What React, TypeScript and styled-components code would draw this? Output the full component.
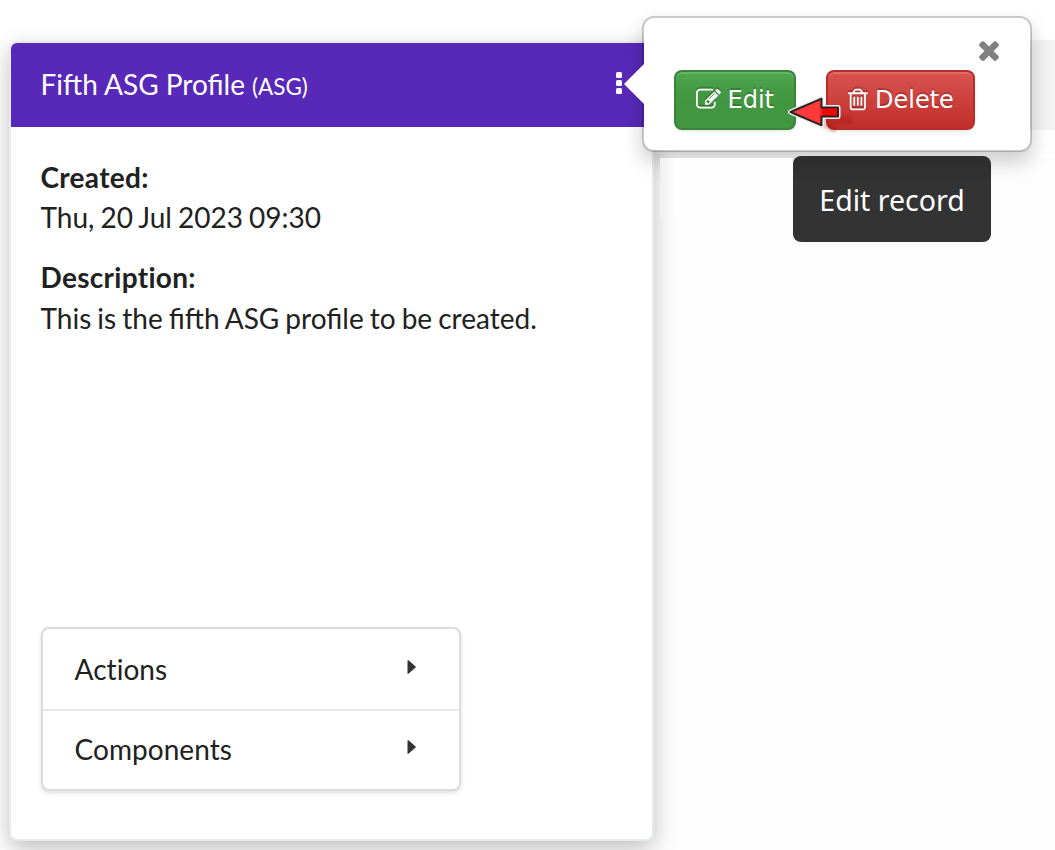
import React from "react";
import styled, { createGlobalStyle } from "styled-components";

const GlobalStyle = createGlobalStyle`
  *, *::before, *::after { box-sizing: border-box; }
  body {
    margin: 0;
    background: #fff;
    color: #212121;
    font-family: Lato, "Liberation Sans", sans-serif;
  }
`;

const Page = styled.main`
  position: relative;
  width: 1055px;
  height: 850px;
  overflow: hidden;
  padding: 41px 0 0 9px;
`;

const SideArea = styled.div`
  position: absolute;
  left: 655px;
  right: 0;
  top: 158px;
  bottom: 0;
  background: #fdfdfd;
`;

const SideBand = styled.div`
  position: absolute;
  left: 1020px;
  right: 0;
  top: 40px;
  height: 90px;
  background: #f3f3f3;
`;

const SidePanel = styled.div`
  position: absolute;
  left: 660px;
  width: 133px;
  top: 158px;
  height: 60px;
  background: linear-gradient(90deg, #efefef, #fdfdfd 14px);
`;

const Card = styled.section`
  position: relative;
  display: flex;
  flex-direction: column;
  width: 645px;
  height: 800px;
  border: 2px solid #e6eaed;
  border-radius: 8px;
  background: #fff;
  box-shadow: 0 8px 22px rgba(0, 0, 0, 0.25);
`;

const CardHeader = styled.header`
  display: flex;
  align-items: center;
  justify-content: space-between;
  height: 84px;
  padding: 0 30px 0 29.5px;
  border-radius: 6px 6px 0 0;
  background: #5829b9;
  color: #fff;
`;

const CardTitle = styled.h1`
  margin: 0;
  font-size: 28px;
  font-weight: 400;
  line-height: 40px;

  small { font-size: 22.4px; }
`;

const MenuButton = styled.button`
  display: flex;
  flex-direction: column;
  gap: 2px;
  padding: 0;
  border: 0;
  background: none;
  margin-bottom: 4px;
`;

const MenuDot = styled.span`
  width: 6px;
  height: 6px;
  border-radius: 1.5px;
  background: #fff;
`;

const CardBody = styled.div`
  display: flex;
  flex: 1;
  flex-direction: column;
  padding: 30px 30px 48px;
`;

const Field = styled.dl`
  margin: 0 0 20px -0.5px;
  font-size: 28px;
  line-height: 40px;
`;

const FieldName = styled.dt`
  font-weight: 700;
  font-variant-ligatures: none;
  letter-spacing: 0.3px;
`;

const FieldValue = styled.dd<{ $offset?: number }>`
  margin: 0;
  padding-top: ${(p) => p.$offset ?? 0}px;
  word-spacing: -1.1px;
`;

const Accordion = styled.div`
  width: 420px;
  height: 164px;
  margin-top: auto;
  border: 2px solid #dcdcdc;
  border-radius: 8px;
  background: #fff;
  box-shadow: 0 2px 4px rgba(34, 36, 38, 0.15);
`;

const AccordionItem = styled.div`
  display: flex;
  align-items: center;
  justify-content: space-between;
  height: 76px;
  padding: 0 43px 0 31.5px;
  font-size: 28px;
  line-height: 40px;
  letter-spacing: 0.05px;
  font-variant-ligatures: none;

  &:first-child {
    height: 82px;
    border-bottom: 2px solid #e7e8e8;
  }
`;

const Caret = styled.svg`
  width: 9px;
  height: 14px;
  margin-bottom: 4px;
  fill: #333;
`;

const Popover = styled.div`
  position: absolute;
  left: 642px;
  top: 16px;
  width: 390px;
  height: 136px;
  padding: 52px 30px 0;
  border: 2px solid rgba(0, 0, 0, 0.2);
  border-radius: 12px;
  background: #fff;
  background-clip: padding-box;
  box-shadow: 0 10px 20px rgba(0, 0, 0, 0.2);
`;

const PopoverTail = styled.svg`
  position: absolute;
  left: -20px;
  top: 46px;
  width: 21px;
  height: 40px;
  fill: #fff;
`;

const CloseButton = styled.button`
  position: absolute;
  right: 26px;
  top: 16.5px;
  display: flex;
  padding: 0;
  border: 0;
  background: none;
  color: #808080;
`;

const ButtonRow = styled.div`
  display: flex;
  gap: 30px;
`;

const tones = {
  green: { from: "#4ea64e", to: "#41963f", edge: "#398439" },
  red: { from: "#d9534f", to: "#c12e2a", edge: "#b92c28" },
};

const ActionButton = styled.button<{ $tone: keyof typeof tones; $width: number }>`
  display: flex;
  align-items: center;
  width: ${(p) => p.$width}px;
  height: 60px;
  padding: 0 0 0 20px;
  border: 2px solid ${(p) => tones[p.$tone].edge};
  border-radius: 8px;
  background: linear-gradient(
    ${(p) => tones[p.$tone].from},
    ${(p) => tones[p.$tone].to} ${(p) => (p.$tone === "green" ? "50%" : "100%")}
  );
  box-shadow: inset 0 2px 0 rgba(255, 255, 255, 0.15), 0 2px 2px rgba(0, 0, 0, 0.075);
  color: #fff;
  font: 400 24px/36px "DejaVu Sans", sans-serif;
  text-shadow: 0 -2px 0 rgba(0, 0, 0, 0.2);
`;

const ButtonIcon = styled.svg<{ $gap: number }>`
  flex: none;
  width: 25px;
  height: 25px;
  margin: -1px ${(p) => p.$gap}px 0 0;
  fill: currentColor;
  filter: drop-shadow(0 -2px 0 rgba(0, 0, 0, 0.2));
`;

const Tooltip = styled.div`
  position: absolute;
  left: 793px;
  top: 156px;
  display: flex;
  align-items: center;
  justify-content: center;
  width: 198px;
  height: 86px;
  padding-top: 2px;
  border-radius: 8px;
  background: linear-gradient(#2d2d2d, #333 30%);
  color: #fff;
  font: 400 28.5px/40px "Noto Sans", sans-serif;
`;

const Pointer = styled.svg`
  position: absolute;
  left: 784px;
  top: 90px;
  width: 80px;
  height: 50px;
`;

const EDIT_PATH =
  "M888 1184l116-116-152-152-116 116v56h96v96h56zm440-720q-16-16-33 1l-350 350q-17 17-1 33t33-1l350-350q17-17 1-33zm80 594v190q0 119-84.5 203.5t-203.5 84.5h-832q-119 0-203.5-84.5t-84.5-203.5v-832q0-119 84.5-203.5t203.5-84.5h832q63 0 117 25 15 7 18 23 3 17-9 29l-49 49q-14 14-32 8-23-6-45-6h-832q-66 0-113 47t-47 113v832q0 66 47 113t113 47h832q66 0 113-47t47-113v-126q0-13 9-22l64-64q15-15 35-7t20 29zm-96-738l288 288-672 672h-288v-288zm444 132l-92 92-288-288 92-92q28-28 68-28t68 28l152 152q28 28 28 68t-28 68z";
const TRASH_PATH =
  "M704 736v576q0 14-9 23t-23 9h-64q-14 0-23-9t-9-23v-576q0-14 9-23t23-9h64q14 0 23 9t9 23zm256 0v576q0 14-9 23t-23 9h-64q-14 0-23-9t-9-23v-576q0-14 9-23t23-9h64q14 0 23 9t9 23zm256 0v576q0 14-9 23t-23 9h-64q-14 0-23-9t-9-23v-576q0-14 9-23t23-9h64q14 0 23 9t9 23zm128 724v-948h-896v948q0 22 7 40.5t14.5 27 10.5 8.5h832q3 0 10.5-8.5t14.5-27 7-40.5zm-672-1076h448l-48-117q-7-9-17-11h-317q-10 2-17 11zm928 32v64q0 14-9 23t-23 9h-96v948q0 83-47 143.5t-113 60.5h-832q-66 0-113-58.5t-47-141.5v-952h-96q-14 0-23-9t-9-23v-64q0-14 9-23t23-9h309l70-167q15-37 54-63t79-26h320q40 0 79 26t54 63l70 167h309q14 0 23 9t9 23z";
const CLOSE_PATH =
  "M1490 1322q0 40-28 68l-136 136q-28 28-68 28t-68-28l-294-294-294 294q-28 28-68 28t-68-28l-136-136q-28-28-28-68t28-68l294-294-294-294q-28-28-28-68t28-68l136-136q28-28 68-28t68 28l294 294 294-294q28-28 68-28t68 28l136 136q28 28 28 68t-28 68l-294 294 294 294q28 28 28 68z";

const POINTER_PATH = "M6.5 22L37.5 8.7V17.5H54V26.5H37.5V35.3Z";

export default function App() {
  return (
    <Page>
      <GlobalStyle />
      <SideArea />
      <SideBand />
      <Card>
        <CardHeader>
          <CardTitle>
            Fifth ASG Profile <small>(ASG)</small>
          </CardTitle>
          <MenuButton aria-label="Menu">
            <MenuDot />
            <MenuDot />
            <MenuDot />
          </MenuButton>
        </CardHeader>
        <CardBody>
          <Field>
            <FieldName>Created:</FieldName>
            <FieldValue>Thu, 20 Jul 2023 09:30</FieldValue>
          </Field>
          <Field>
            <FieldName>Description:</FieldName>
            <FieldValue $offset={1}>This is the fifth ASG profile to be created.</FieldValue>
          </Field>
          <Accordion>
            {["Actions", "Components"].map((label) => (
              <AccordionItem key={label}>
                {label}
                <Caret viewBox="0 0 9 14">
                  <path d="M0.5 0.5Q0.5 0 1.500 0.200L8.600 6.400Q9 7 8.600 7.600L1.500 13.800Q0.500 14 0.500 13.500Z" />
                </Caret>
              </AccordionItem>
            ))}
          </Accordion>
        </CardBody>
      </Card>
      <Popover>
        <PopoverTail viewBox="0 0 21 40">
          <path d="M0 20L20 0H21V40H20Z" />
        </PopoverTail>
        <CloseButton aria-label="Close">
          <svg width="30" height="30" viewBox="0 0 1792 1792" fill="currentColor">
            <path d={CLOSE_PATH} />
          </svg>
        </CloseButton>
        <ButtonRow>
          <ActionButton $tone="green" $width={122}>
            <ButtonIcon $gap={6.5} viewBox="0 0 1792 1792">
              <path d={EDIT_PATH} />
            </ButtonIcon>
            Edit
          </ActionButton>
          <ActionButton $tone="red" $width={149}>
            <ButtonIcon $gap={2} viewBox="192 0 1792 1792">
              <path d={TRASH_PATH} />
            </ButtonIcon>
            Delete
          </ActionButton>
        </ButtonRow>
      </Popover>
      <SidePanel />
      <Tooltip>Edit record</Tooltip>
      <Pointer viewBox="0 0 80 50">
        <defs>
          <linearGradient id="pointerFill" x1="0" x2="1" y1="0" y2="0">
            <stop offset="0" stopColor="#ff3b3b" />
            <stop offset="0.6" stopColor="#ff3939" />
            <stop offset="0.7" stopColor="#e80808" />
            <stop offset="1" stopColor="#f00" />
          </linearGradient>
          <filter id="pointerBlur">
            <feGaussianBlur stdDeviation="1" />
          </filter>
        </defs>
        <path d={POINTER_PATH} transform="translate(14 8)" fill="#900" opacity="0.2" filter="url(#pointerBlur)" />
        <path d={POINTER_PATH} fill="#f5f5f5" stroke="#f0f0f0" strokeWidth="5" strokeLinejoin="round" />
        <path d={POINTER_PATH} fill="url(#pointerFill)" stroke="#2c2222" strokeWidth="2" strokeLinejoin="round" />
      </Pointer>
    </Page>
  );
}
